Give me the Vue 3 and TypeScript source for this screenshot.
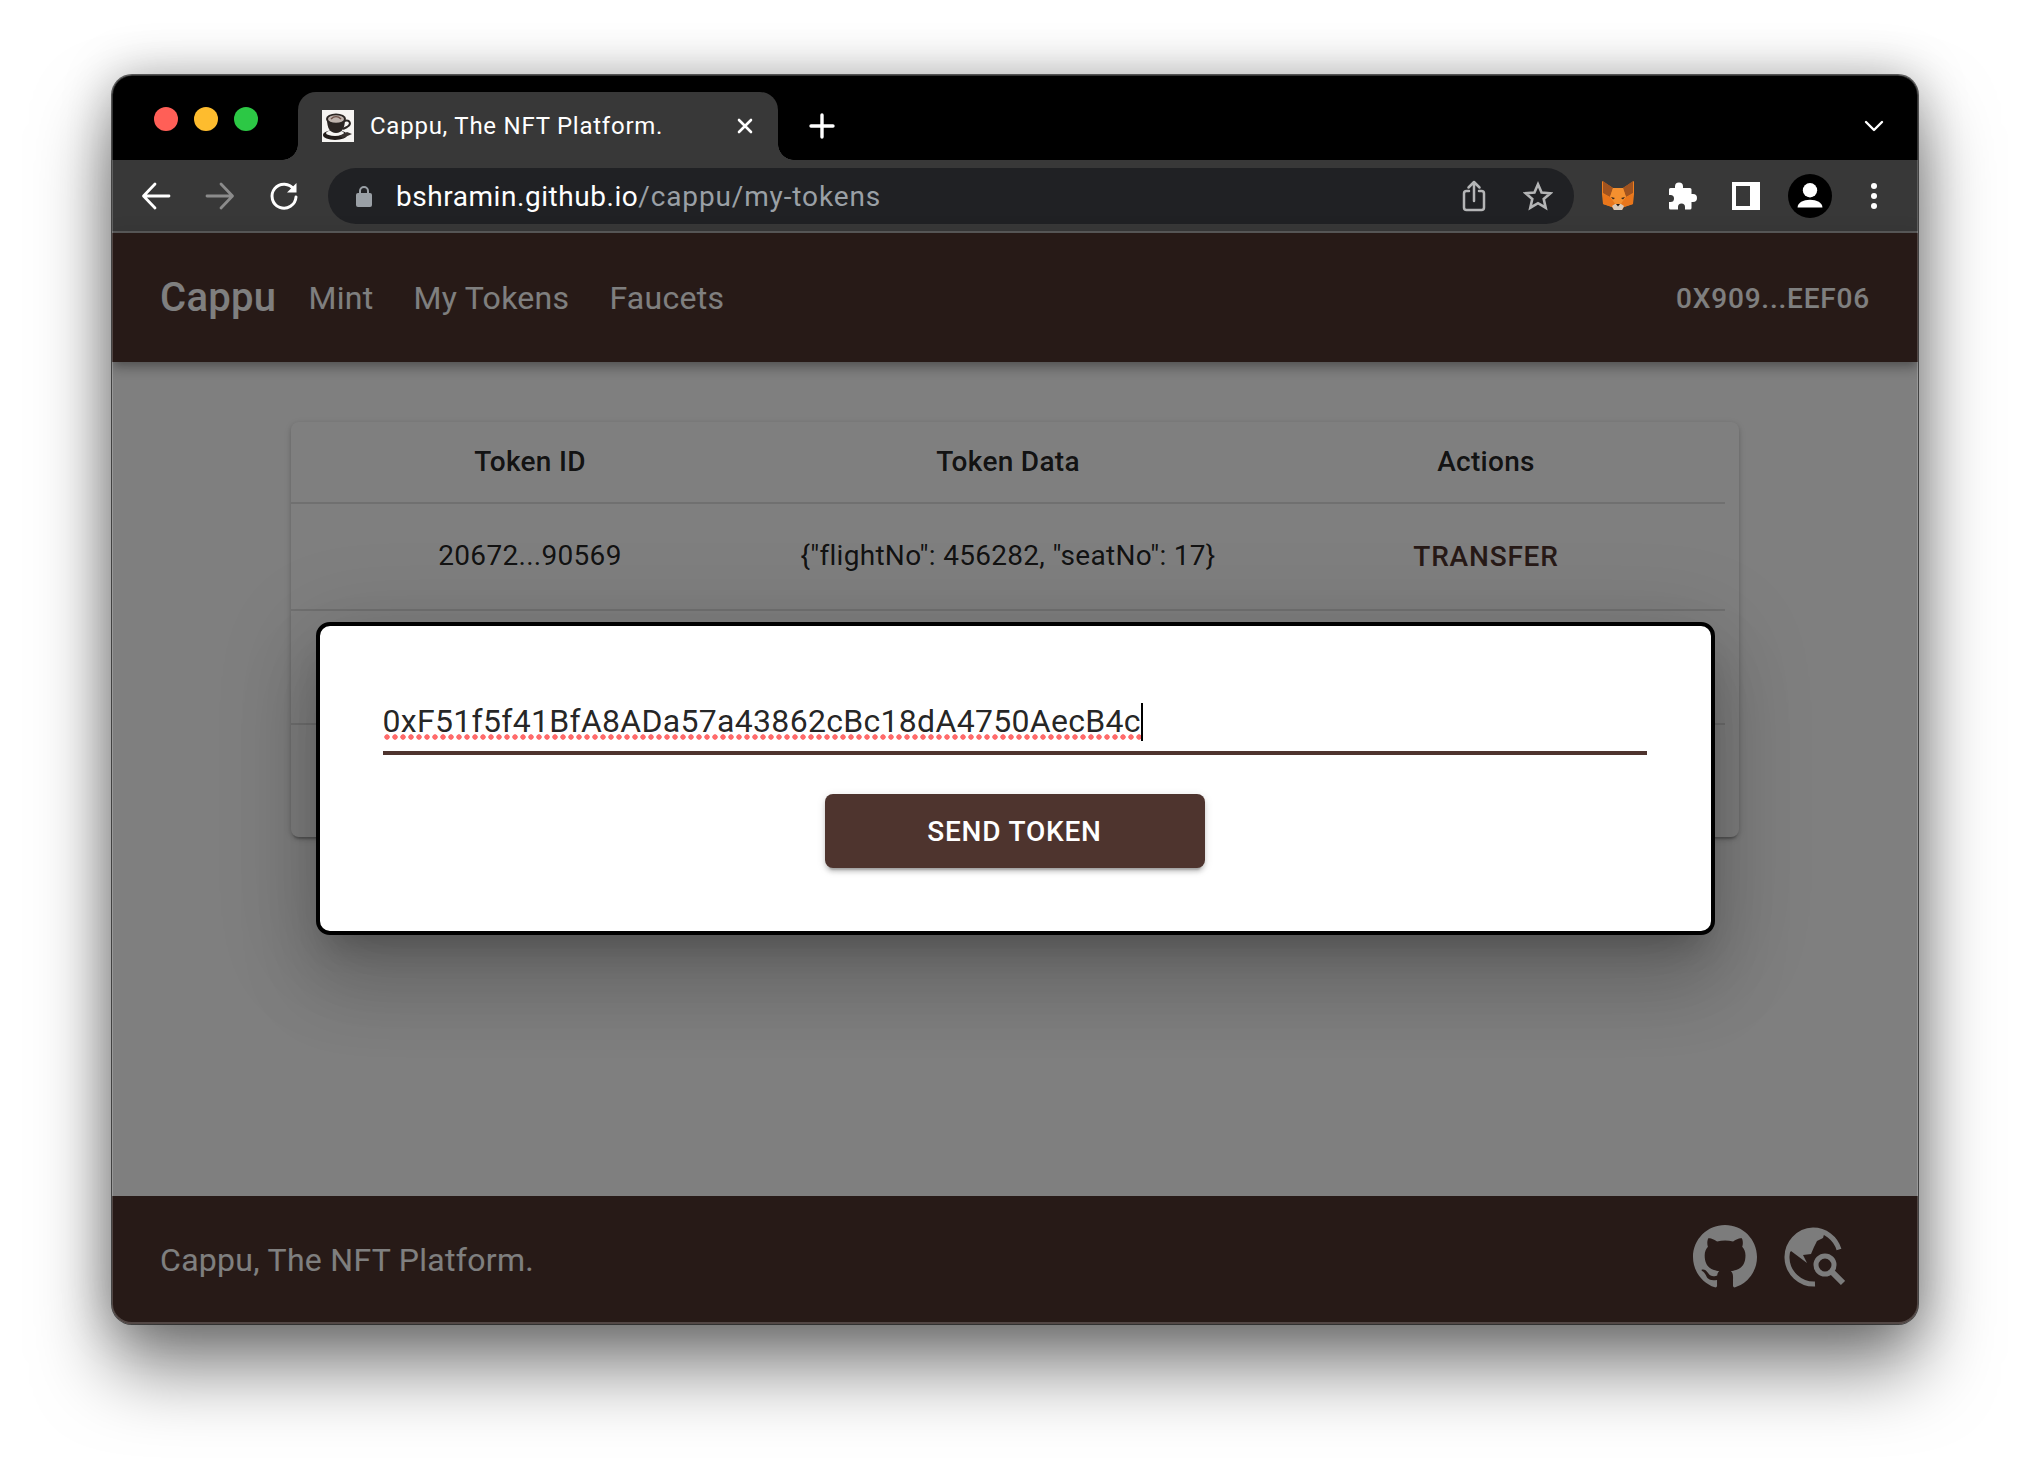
<script setup lang="ts">
const columns: string[] = ['Token ID', 'Token Data', 'Actions']
const address = '0xF51f5f41BfA8ADa57a43862cBc18dA4750AecB4c'
</script>

<template>
  <div class="page">
    <div class="window">
      <div class="tabstrip">
        <div class="lights">
          <span class="light red"></span>
          <span class="light yellow"></span>
          <span class="light green"></span>
        </div>
        <div class="tab">
          <svg class="favicon" viewBox="0 0 32 32">
            <rect width="32" height="32" fill="#f6f4f2" />
            <ellipse cx="13" cy="25" rx="12" ry="5" fill="#221c1a" />
            <ellipse cx="13" cy="23" rx="9" ry="3" fill="#f6f4f2" />
            <path d="M5 9c0 9 3 14 9 14s9-5 9-14z" fill="#2b2523" />
            <path d="M22 11c6-2 8 3 3 6l-4 2" fill="none" stroke="#2b2523" stroke-width="2" />
            <ellipse cx="14" cy="9" rx="10" ry="5.500" fill="#2b2523" />
            <ellipse cx="14" cy="9" rx="8" ry="3.800" fill="#bfb3ad" />
            <path d="M9 9c3-3 7-3 10 0" fill="none" stroke="#6e524a" stroke-width="1.500" />
            <path d="M17 26l8-4 5 2-9 4z" fill="#3a3330" />
          </svg>
          <span class="tab-title">Cappu, The NFT Platform.</span>
          <svg class="tab-close" viewBox="0 0 18 18"><path d="M3 3l12 12M15 3L3 15" stroke="#fff" stroke-width="2.600" stroke-linecap="round" /></svg>
        </div>
        <svg class="new-tab" viewBox="0 0 26 26"><path d="M13 2v22M2 13h22" stroke="#fff" stroke-width="3.400" stroke-linecap="round" /></svg>
        <svg class="tab-menu" viewBox="0 0 20 12"><path d="M2 2l8 8 8-8" fill="none" stroke="#fff" stroke-width="2.400" stroke-linecap="round" stroke-linejoin="round" /></svg>
      </div>

      <div class="toolbar">
        <svg class="tool" viewBox="0 0 32 32"><path d="M29 16H4M15 4L3.500 16 15 28" fill="none" stroke="#fff" stroke-width="2.800" stroke-linecap="round" stroke-linejoin="round" /></svg>
        <svg class="tool" viewBox="0 0 32 32"><path d="M3 16h25M17 4l11.500 12L17 28" fill="none" stroke="#8b8b8b" stroke-width="2.800" stroke-linecap="round" stroke-linejoin="round" /></svg>
        <svg class="tool" viewBox="0 0 32 32"><path d="M26 9.500A12 12 0 1 0 28 17" fill="none" stroke="#fff" stroke-width="3" stroke-linecap="round" /><path d="M28.500 3v9.500H19z" fill="#fff" /></svg>
        <div class="omnibox">
          <svg class="lock" viewBox="0 0 16 22"><path d="M4 9V6a4 4 0 0 1 8 0v3" fill="none" stroke="#9aa0a6" stroke-width="2" /><rect x="0" y="8" width="16" height="14" rx="2" fill="#9aa0a6" /></svg>
          <span class="url"><span class="host">bshramin.github.io</span><span class="path">/cappu/my-tokens</span></span>
          <svg class="omni-icon" viewBox="0 0 24 32"><path d="M7 11H4.500A2.500 2.500 0 0 0 2 13.500V27.500A2.500 2.500 0 0 0 4.500 30h15a2.500 2.500 0 0 0 2.500-2.500V13.500A2.500 2.500 0 0 0 19.500 11H17M12 21V2M6.500 7.500L12 2l5.500 5.500" fill="none" stroke="#b4b5b6" stroke-width="2.500" stroke-linecap="round" stroke-linejoin="round" /></svg>
          <svg class="omni-icon star" viewBox="0 0 32 32"><path d="M16 3.500l3.800 8.700 9.400.9-7.100 6.200 2.100 9.200-8.200-4.800-8.200 4.800 2.100-9.200-7.100-6.200 9.400-.9z" fill="none" stroke="#b4b5b6" stroke-width="2.800" stroke-linejoin="miter" /></svg>
        </div>
        <div class="extensions">
          <span class="slot">
            <svg class="fox" viewBox="0 0 32 31">
              <path d="M0 1L11 8H21L32 1V14L31 24L22 27L20 30H12L10 27L1 24L0 14Z" fill="#ef7f1f" />
              <path d="M1 1L11 8L8 17L1 13ZM31 1L21 8L24 17L31 13Z" fill="#a0531f" />
              <path d="M11 8H21L24 17L19 24H13L8 17Z" fill="#f4902f" />
              <path d="M1 14L8 17L13 24L10 27L1 24ZM31 14L24 17L19 24L22 27L31 24Z" fill="#e9761b" />
              <path d="M9 17l4 1-2 1.500zM23 17l-4 1 2 1.500z" fill="#33261f" />
              <path d="M10 26l3-2h6l3 2-2 4h-8z" fill="#d9c9b8" />
              <path d="M14 24h4l-2 2.500z" fill="#241a14" />
            </svg>
          </span>
          <span class="slot">
            <svg class="puzzle" viewBox="0 0 30 30"><path d="M12 1.500a4 4 0 0 1 4 4V7h7a1.500 1.500 0 0 1 1.500 1.500V13h1.500a4 4 0 0 1 0 8h-1.500v6a1.500 1.500 0 0 1-1.500 1.500h-5V26a3.500 3.500 0 0 0-7 0v2.500H3.500A1.500 1.500 0 0 1 2 27v-6h1.500a3.500 3.500 0 0 0 0-7H2V8.500A1.500 1.500 0 0 1 3.500 7H8V5.500a4 4 0 0 1 4-4z" fill="#fff" /></svg>
          </span>
          <span class="slot"><span class="side-panel"></span></span>
          <span class="slot">
            <span class="avatar">
              <svg viewBox="0 0 44 46"><circle cx="22" cy="17" r="7.500" fill="#fff" /><path d="M9 35c0-5 6-8 13-8s13 3 13 8z" fill="#fff" /></svg>
            </span>
          </span>
          <span class="slot"><span class="kebab"><i></i><i></i><i></i></span></span>
        </div>
      </div>

      <div class="app">
        <header class="appbar">
          <span class="brand">Cappu</span>
          <nav class="links">
            <a>Mint</a>
            <a>My Tokens</a>
            <a>Faucets</a>
          </nav>
          <span class="account">0X909...EEF06</span>
        </header>

        <main class="content">
          <section class="card">
            <div class="row head">
              <div v-for="c in columns" :key="c" class="cell">{{ c }}</div>
            </div>
            <div class="row body">
              <div class="cell">20672...90569</div>
              <div class="cell">{"flightNo": 456282, "seatNo": 17}</div>
              <div class="cell transfer">TRANSFER</div>
            </div>
            <div class="row empty"></div>
          </section>
        </main>

        <footer class="footer">
          <span>Cappu, The NFT Platform.</span>
          <div class="social">
            <svg class="github" viewBox="0 0 16 16"><path fill="#f8f8f8" fill-rule="evenodd" d="M8 0C3.580 0 0 3.580 0 8c0 3.540 2.290 6.530 5.470 7.590.4.070.55-.17.55-.38 0-.19-.01-.82-.01-1.490-2.010.37-2.530-.49-2.690-.94-.09-.23-.48-.94-.82-1.130-.28-.15-.68-.52-.01-.53.63-.01 1.080.58 1.230.82.72 1.210 1.870.87 2.330.66.070-.52.28-.87.51-1.070-1.780-.2-3.640-.89-3.640-3.950 0-.87.31-1.590.82-2.150-.08-.2-.36-1.020.08-2.120 0 0 .67-.21 2.200.82.64-.18 1.320-.27 2-.27s1.360.09 2 .27c1.530-1.040 2.200-.82 2.200-.82.44 1.100.16 1.920.08 2.120.51.56.82 1.270.82 2.150 0 3.070-1.870 3.750-3.650 3.950.29.25.54.73.54 1.480 0 1.070-.01 1.930-.01 2.200 0 .21.15.46.55.38A8.010 8.010 0 0 0 16 8c0-4.420-3.580-8-8-8z" /></svg>
            <svg class="scan" viewBox="0 0 64 64">
              <path d="M58 24.500A27 27 0 0 0 32 5A27 27 0 0 0 34 59" fill="none" stroke="#f8f8f8" stroke-width="5" />
              <path d="M44 6L42 13L36 16L33 22L30 29L22 30L26 38L10 26L7 30L10 18L20 8L32 5Z" fill="#f8f8f8" />
              <circle cx="44" cy="40" r="9" fill="none" stroke="#f8f8f8" stroke-width="5" />
              <path d="M51 47L62 58" stroke="#f8f8f8" stroke-width="6" />
            </svg>
          </div>
        </footer>

        <div class="scrim">
          <div class="dialog">
            <div class="field">
              <span class="typed">{{ address }}</span><i class="caret"></i>
            </div>
            <button class="send" type="button">SEND TOKEN</button>
          </div>
        </div>
      </div>
    </div>
  </div>
</template>

<style>
html, body { margin: 0; background: #fff; }
</style>

<style scoped>
.page {
  width: 2030px;
  height: 1472px;
  box-sizing: border-box;
  padding: 75px 112px 0;
  background: #fff;
  overflow: hidden;
  font-family: Roboto, "Liberation Sans", sans-serif;
}
.window {
  height: 1249px;
  display: flex;
  flex-direction: column;
  border-radius: 20px;
  overflow: hidden;
  position: relative;
  box-shadow: 0 0 0 1px rgba(0,0,0,.6), 0 44px 76px rgba(0,0,0,.5), 0 0 50px rgba(0,0,0,.28);
}
.window::after {
  content: "";
  position: absolute;
  inset: 0;
  border: 1px solid rgba(255,255,255,.2);
  border-bottom-width: 2px;
  border-radius: 20px;
  pointer-events: none;
}
.tabstrip {
  height: 85px;
  flex: none;
  background: #000;
  display: flex;
  align-items: flex-end;
  box-sizing: border-box;
}
.lights {
  display: flex;
  gap: 16px;
  width: 186px;
  padding: 0 0 29px 42px;
  box-sizing: border-box;
  flex: none;
}
.light { width: 24px; height: 24px; border-radius: 50%; }
.red { background: #ff5f57; }
.yellow { background: #febc2e; }
.green { background: #2cc845; }
.tab {
  width: 480px;
  height: 68px;
  background: #383838;
  border-radius: 18px 18px 0 0;
  display: flex;
  align-items: center;
  padding: 0 24px;
  box-sizing: border-box;
  flex: none;
  position: relative;
}
.tab::before, .tab::after {
  content: "";
  position: absolute;
  bottom: 0;
  width: 16px;
  height: 16px;
}
.tab::before { left: -16px; background: radial-gradient(circle at 0 0, #000 15.500px, #383838 16px); }
.tab::after { right: -16px; background: radial-gradient(circle at 100% 0, #000 15.500px, #383838 16px); }
.favicon { width: 32px; height: 32px; flex: none; }
.tab-title { margin-left: 16px; color: #fff; font-size: 24px; white-space: nowrap; letter-spacing: .75px; flex: 1; }
.tab-close { width: 18px; height: 18px; flex: none; }
.new-tab { width: 26px; height: 26px; margin: 0 0 21px 31px; flex: none; }
.tab-menu { width: 20px; height: 12px; margin: 0 34px 28px auto; flex: none; }

.toolbar {
  height: 73px;
  flex: none;
  box-sizing: border-box;
  background: #383838;
  border-bottom: 2px solid #5c5c5c;
  display: flex;
  align-items: center;
  padding: 0 0 0 28px;
  gap: 32px;
}
.tool { width: 32px; height: 32px; flex: none; }
.omnibox {
  margin-left: -4px;
  margin-right: -20px;
  width: 1246px;
  height: 56px;
  flex: none;
  background: #202124;
  border-radius: 28px;
  display: flex;
  align-items: center;
  padding-left: 28px;
  box-sizing: border-box;
}
.lock { width: 16px; height: 22px; flex: none; }
.url { margin-left: 24px; padding-top: 2px; font-size: 28px; white-space: nowrap; flex: 1; }
.host { color: #fff; letter-spacing: .55px; }
.path { color: #9aa0a6; letter-spacing: .86px; }
.omni-icon { width: 24px; height: 32px; flex: none; margin-right: 21px; }
.omni-icon.star { width: 30px; height: 30px; margin-right: 21px; margin-left: 16px; }
.extensions { display: flex; align-items: center; flex: none; }
.slot { width: 64px; height: 64px; display: flex; align-items: center; justify-content: center; flex: none; }
.fox { width: 32px; height: 31px; }
.puzzle { width: 30px; height: 30px; }
.side-panel {
  width: 28px;
  height: 20px;
  background: linear-gradient(90deg, #fff 0 4px, #383838 4px 18px, #fff 18px);
  border-top: 4px solid #fff;
  border-bottom: 4px solid #fff;
}
.avatar {
  width: 44px;
  height: 44px;
  border-radius: 50%;
  background: #000;
  display: flex;
}
.avatar svg { width: 44px; height: 44px; }
.kebab { display: flex; flex-direction: column; gap: 4px; }
.kebab i { width: 6px; height: 6px; border-radius: 50%; background: #fff; display: block; }

.app {
  flex: 1;
  min-height: 0;
  position: relative;
  display: flex;
  flex-direction: column;
}
.appbar {
  height: 129px;
  flex: none;
  background: #4e342e;
  color: #fff;
  display: flex;
  align-items: center;
  padding: 0 48px;
  box-shadow: 0 4px 8px -2px rgba(0,0,0,.2), 0 8px 10px 0 rgba(0,0,0,.14), 0 2px 20px 0 rgba(0,0,0,.12);
  position: relative;
}
.brand { font-size: 40px; font-weight: 500; letter-spacing: .3px; }
.links { display: flex; gap: 40px; margin-left: 32px; font-size: 32px; letter-spacing: .3px; }
.account { margin-left: auto; padding-top: 2px; font-size: 28px; font-weight: 500; letter-spacing: .8px; }

.content {
  flex: 1;
  min-height: 0;
  background: #fff;
  padding: 60px 0 0 179px;
}
.card {
  width: 1448px;
  height: 415px;
  background: #fff;
  border-radius: 8px;
  box-sizing: border-box;
  padding-right: 14px;
  box-shadow: 0 4px 2px -2px rgba(0,0,0,.2), 0 2px 4px 0 rgba(0,0,0,.14), 0 2px 10px 0 rgba(0,0,0,.12);
}
.row {
  display: grid;
  grid-template-columns: repeat(3, 1fr);
  height: 107px;
  align-items: center;
  border-bottom: 2px solid #e0e0e0;
  box-sizing: border-box;
  font-size: 28px;
  letter-spacing: .3px;
  color: rgba(0,0,0,.87);
}
.row.head { height: 82px; padding-bottom: 1px; font-weight: 500; }
.row.body { padding-bottom: 2px; }
.row.empty { height: 114px; }
.cell { text-align: center; }
.transfer { color: #4e342e; font-weight: 500; letter-spacing: .8px; padding-top: 2px; }

.footer {
  height: 128px;
  flex: none;
  background: #4e342e;
  color: #fff;
  display: flex;
  align-items: center;
  padding: 0 73px 0 48px;
  font-size: 32px;
  letter-spacing: .3px;
}
.social { margin-left: auto; margin-bottom: 6px; display: flex; align-items: center; gap: 24px; }
.github { width: 64px; height: 64px; }
.scan { width: 64px; height: 64px; }

.scrim {
  position: absolute;
  inset: 0;
  background: rgba(0,0,0,.5);
  display: flex;
  align-items: center;
  justify-content: center;
}
.dialog {
  width: 1399px;
  height: 313px;
  box-sizing: border-box;
  background: #fff;
  border: 4px solid #000;
  border-radius: 14px;
  padding: 64px 64px 0 63px;
  display: flex;
  flex-direction: column;
  align-items: center;
  box-shadow: 0 22px 30px -14px rgba(0,0,0,.2), 0 48px 76px 6px rgba(0,0,0,.14), 0 18px 92px 16px rgba(0,0,0,.12);
}
.field {
  width: 100%;
  height: 65px;
  flex: none;
  box-sizing: border-box;
  border-bottom: 4px solid #4e342e;
  font-size: 32px;
  line-height: 62px;
  color: rgba(0,0,0,.87);
  letter-spacing: .3px;
  display: flex;
  white-space: nowrap;
}
.typed {
  height: 50px;
  background: radial-gradient(circle at 4px 3px, #ff6b6b 2.400px, transparent 3px) 0 100% / 8px 6px repeat-x;
}
.caret { width: 2px; height: 38px; background: #000; margin-top: 13px; flex: none; }
.send {
  margin-top: 39px;
  width: 380px;
  height: 74px;
  flex: none;
  background: #4e342e;
  color: #fff;
  border: 0;
  border-radius: 8px;
  font: 500 28px Roboto, "Liberation Sans", sans-serif;
  letter-spacing: .8px;
  box-shadow: 0 6px 2px -4px rgba(0,0,0,.2), 0 4px 4px 0 rgba(0,0,0,.14), 0 2px 10px 0 rgba(0,0,0,.12);
}
</style>
